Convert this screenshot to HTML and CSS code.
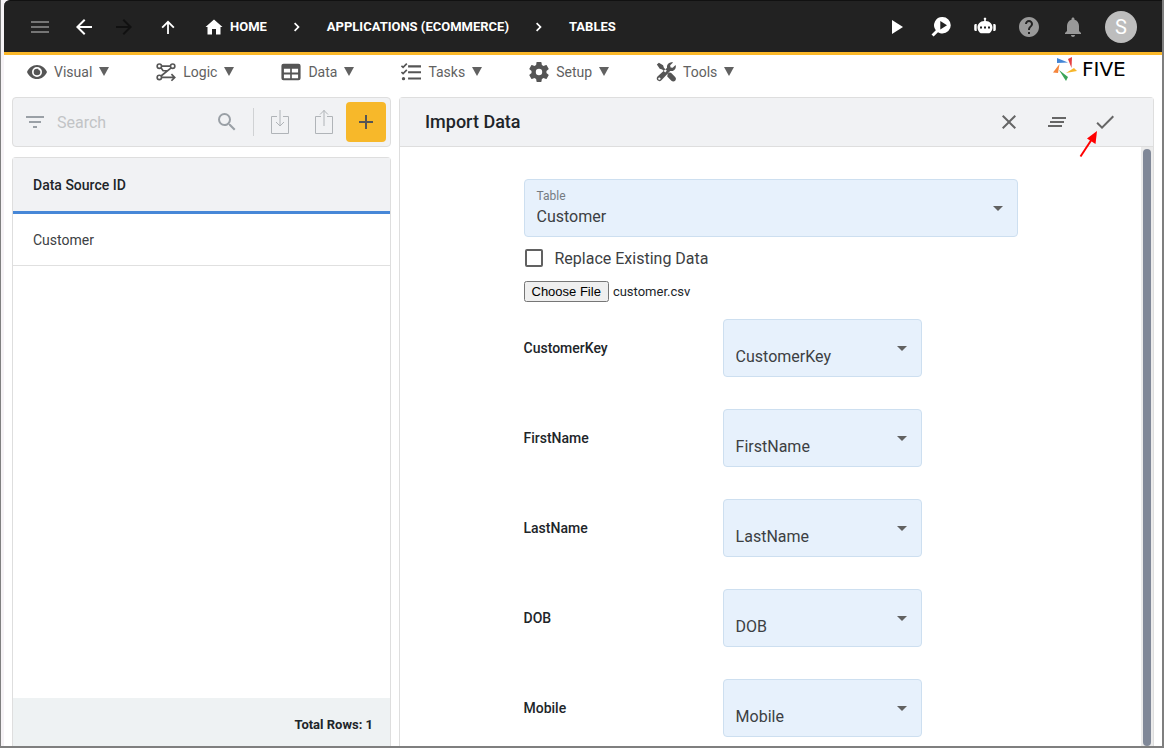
FILE: index.html
```html
<!DOCTYPE html>
<html lang="en">
<head>
<meta charset="utf-8">
<meta name="viewport" content="width=device-width, initial-scale=1">
<title>Five - Import Data</title>
<link rel="stylesheet" href="styles.css">
</head>
<body>
<div class="window">
  <header class="topbar">
    <button class="icon-btn dim" aria-label="Menu"><svg viewBox="0 0 24 24"><path d="M3 6h18v2H3zM3 11h18v2H3zM3 16h18v2H3z"/></svg></button>
    <div class="history">
      <button class="icon-btn" aria-label="Back"><svg viewBox="0 0 24 24"><path d="M20 11H7.830l5.590-5.590L12 4l-8 8 8 8 1.410-1.410L7.830 13H20z"/></svg></button>
      <button class="icon-btn off" aria-label="Forward" disabled><svg viewBox="0 0 24 24"><path d="M12 4l-1.410 1.410L16.170 11H4v2h12.170l-5.580 5.590L12 20l8-8z"/></svg></button>
    </div>
    <button class="icon-btn" aria-label="Up"><svg viewBox="0 0 24 24"><path d="M5.500 12l1.300 1.300 4.300-4.300V19h1.800V9l4.300 4.300 1.300-1.300L12 5.500z"/></svg></button>
    <nav class="crumbs" aria-label="Breadcrumb">
      <a href="#" class="home"><svg viewBox="0 0 24 24"><path d="M10 19.500v-5.500h4v5.500h4.500v-7.500H20.500L12 4.500 3.500 12H5.500v7.500z"/></svg>HOME</a>
      <svg viewBox="0 0 24 24"><path d="M10.200 7.500L9 8.700l3.300 3.300L9 15.300l1.200 1.200 4.500-4.500z"/></svg>
      <a href="#">APPLICATIONS (ECOMMERCE)</a>
      <svg viewBox="0 0 24 24"><path d="M10.200 7.500L9 8.700l3.300 3.300L9 15.300l1.200 1.200 4.500-4.500z"/></svg>
      <a href="#">TABLES</a>
    </nav>
    <div class="actions">
      <button class="icon-btn" aria-label="Run"><svg viewBox="0 0 24 24"><path d="M7 5v14l11-7z"/></svg></button>
      <button class="icon-btn" aria-label="Inspect"><svg viewBox="0 0 24 24"><path fill-rule="evenodd" d="M13.500 2a8.200 8.200 0 0 1 0 16.500c-1.700 0-3.200-.5-4.500-1.300L4.600 21.600 2.500 19.500l4.300-4.300A8.200 8.200 0 0 1 13.500 2zM11.300 6v8.500l6.700-4.250z"/></svg></button>
      <button class="icon-btn" aria-label="Assistant"><svg viewBox="0 0 24 24"><path fill-rule="evenodd" d="M11.200 6V4.800a1.300 1.300 0 1 1 1.600 0V6c4 .2 6.700 3 6.700 6.500 0 2.300-1.300 4.500-3.200 5.700H7.700c-1.900-1.200-3.200-3.400-3.200-5.700C4.500 9 7.200 6.200 11.200 6zM7 11.500v2h2v-2zm4 0v2h2v-2zm4 0v2h2v-2zM2.400 9h1.300v7H2.400A1.500 1.500 0 0 1 1.200 14.500v-4A1.500 1.500 0 0 1 2.400 9zM20.300 9h1.300a1.500 1.500 0 0 1 1.200 1.500v4a1.500 1.500 0 0 1-1.200 1.500h-1.300z"/></svg></button>
      <button class="icon-btn grey" aria-label="Help"><svg viewBox="0 0 24 24"><path d="M12 2C6.480 2 2 6.480 2 12s4.480 10 10 10 10-4.480 10-10S17.520 2 12 2zm1 17h-2v-2h2v2zm2.070-7.750l-.9.920C13.450 12.900 13 13.500 13 15h-2v-.5c0-1.100.45-2.100 1.170-2.830l1.240-1.260c.37-.36.59-.86.59-1.410 0-1.100-.9-2-2-2s-2 .9-2 2H8c0-2.210 1.790-4 4-4s4 1.790 4 4c0 .88-.36 1.680-.93 2.250z"/></svg></button>
      <button class="icon-btn grey" aria-label="Notifications"><svg viewBox="0 0 24 24"><path d="M12 22c1.100 0 2-.9 2-2h-4c0 1.100.89 2 2 2zm6-6v-5c0-3.070-1.640-5.640-4.500-6.320V4c0-.83-.67-1.500-1.500-1.500s-1.500.67-1.500 1.500v.68C7.630 5.360 6 7.920 6 11v5l-2 2v1h16v-1l-2-2z"/></svg></button>
      <button class="avatar" aria-label="Account">S</button>
    </div>
  </header>

  <nav class="menubar" aria-label="Main">
    <div class="menus">
      <button><svg viewBox="0 0 24 24"><path fill-rule="evenodd" d="M12 3.500C6.500 3.500 2 7 0 12c2 5 6.500 8.500 12 8.500s10-3.500 12-8.500c-2-5-6.500-8.500-12-8.500zM12 18a6 6 0 1 1 0-12 6 6 0 0 1 0 12zM12 8a4 4 0 1 0 4 4c0-.7-.2-1.300-.5-1.900a2 2 0 0 1-2-2A4 4 0 0 0 12 8z"/></svg>Visual <i></i></button>
      <button><svg viewBox="0 0 24 24" class="stroke"><circle cx="4" cy="5" r="2.600"/><circle cx="20" cy="5" r="2.600"/><circle cx="4" cy="18.500" r="2.600"/><path d="M6.600 5h10.800M18.200 7L6 16.800M6.600 18.500H22M18.500 14.500l4 4-4 4M6 7l2.500 3.500h5"/></svg>Logic <i></i></button>
      <button><svg viewBox="0 0 24 24"><path fill-rule="evenodd" d="M3 2h18a2.500 2.500 0 0 1 2.500 2.500v15A2.500 2.500 0 0 1 21 22H3a2.500 2.500 0 0 1-2.500-2.500v-15A2.500 2.500 0 0 1 3 2zM3.500 8v4.500H11V8zM13 8v4.500h7.500V8zM3.500 15v4.500H11V15zM13 15v4.500h7.500V15z"/></svg>Data <i></i></button>
      <button><svg viewBox="0 0 24 24"><path d="M8.500 4H24v2.500H8.500zM8.500 11H24v2.500H8.500zM8.500 18.500H24V21H8.500z"/><circle cx="3" cy="20" r="2"/><path fill="none" stroke="currentColor" stroke-width="2" d="M.5 4.500l2 2L7 2M.5 12l2 2L7 9.500"/></svg>Tasks <i></i></button>
      <button><svg viewBox="2 2 20 20"><path d="M19.430 12.980c.04-.32.07-.64.07-.98s-.03-.66-.07-.98l2.110-1.650c.19-.15.24-.42.12-.64l-2-3.460c-.12-.22-.39-.3-.61-.22l-2.490 1c-.52-.4-1.080-.73-1.690-.98l-.38-2.650A.49.49 0 0 0 14 2h-4c-.25 0-.46.18-.49.42l-.38 2.650c-.61.25-1.170.59-1.690.98l-2.490-1c-.23-.09-.49 0-.61.22l-2 3.460c-.13.22-.07.49.12.64l2.110 1.650c-.04.32-.07.65-.07.98s.03.66.07.98l-2.110 1.650c-.19.15-.24.42-.12.64l2 3.460c.12.22.39.3.61.22l2.490-1c.52.4 1.080.73 1.690.98l.38 2.650c.03.24.24.42.49.42h4c.25 0 .46-.18.49-.42l.38-2.650c.61-.25 1.170-.59 1.690-.98l2.490 1c.23.09.49 0 .61-.22l2-3.460c.12-.22.07-.49-.12-.64l-2.110-1.650zM12 15.200a3.200 3.200 0 1 1 0-6.400 3.200 3.200 0 0 1 0 6.400z"/></svg>Setup <i></i></button>
      <button><svg viewBox="0 0 24 24"><path fill-rule="evenodd" d="M1 3l2.500-2 5 3 1 3 3.500 3.500-2 2L7.500 9l-3-1zM14 14l2-1.500 2 .5 5 5c1.500 1.500 1 3.500 0 4.500s-3 1.500-4.500 0l-5-5zM17.500.5c1-.3 2-.3 3 0L17 4l.5 2.500 2.500.5 3.500-3.500c1 3-.5 6.500-3.500 7.200-1.200.3-2 .2-3 0L6.500 22c-1.500 1.500-3.500 1.200-4.700 0s-1.300-3.200 0-4.500L13.300 7C12.500 4 14.500 1 17.500.5zM4 18.500a1.400 1.400 0 1 0 .1 0z"/></svg>Tools <i></i></button>
    </div>
    <a href="#" class="brand" aria-label="Five">
      <svg viewBox="0 0 24 24"><path fill="#4285d6" d="M4 1l11 4.500-11 .5z"/><path fill="#e53f3f" d="M15 2l4-2-.5 11z"/><path fill="#f6b62b" d="M13 16l8-5 3 3z"/><path fill="#3ba457" d="M6 13l9 7-2 4z"/><path fill="#f5853c" d="M6.500 7L5 16l-5-.5z"/></svg>
      FIVE
    </a>
  </nav>

  <main class="panes">
    <section class="list-pane">
      <div class="searchbar">
        <svg viewBox="0 0 24 24"><path d="M3 6h18v2H3zM6 11h12v2H6zM10 16h4v2h-4z"/></svg>
        <input type="search" placeholder="Search" aria-label="Search">
        <button class="icon-btn" aria-label="Search"><svg viewBox="0 0 24 24"><path d="M15.500 14h-.79l-.28-.27A6.471 6.471 0 0 0 16 9.500 6.500 6.500 0 1 0 9.500 16c1.610 0 3.090-.59 4.230-1.570l.27.28v.79l5 4.990L20.490 19l-4.990-5zm-6 0C7.010 14 5 11.990 5 9.500S7.010 5 9.500 5 14 7.010 14 9.500 11.990 14 9.500 14z"/></svg></button>
        <div class="transfer">
          <button class="icon-btn" aria-label="Import"><svg viewBox="0 0 24 24" class="thin"><path d="M9 6.500H3.500v17h17v-17H15M12 0v16M8 12l4 4 4-4"/></svg></button>
          <button class="icon-btn" aria-label="Export"><svg viewBox="0 0 24 24" class="thin"><path d="M9 6.500H3.500v17h17v-17H15M12 16V0M8 4.500l4-4 4 4"/></svg></button>
        </div>
        <button class="add" aria-label="Add"><svg viewBox="0 0 24 24"><path d="M19 13h-6v6h-2v-6H5v-2h6V5h2v6h6z"/></svg></button>
      </div>
      <div class="list">
        <table>
          <thead><tr><th scope="col">Data Source ID</th></tr></thead>
          <tbody><tr><td>Customer</td></tr></tbody>
        </table>
        <footer>Total Rows: 1</footer>
      </div>
    </section>

    <section class="form-pane">
      <header class="form-head">
        <h1>Import Data</h1>
        <button class="icon-btn" aria-label="Close"><svg viewBox="0 0 24 24"><path d="M19 6.410L17.590 5 12 10.590 6.410 5 5 6.410 10.590 12 5 17.590 6.410 19 12 13.410 17.590 19 19 17.590 13.410 12z"/></svg></button>
        <button class="icon-btn" aria-label="Details"><svg viewBox="0 0 24 24"><path d="M7 7h14v2H7zM5 11h14v2H5zM3 15h14v2H3z"/></svg></button>
        <button class="icon-btn save" aria-label="Save"><svg viewBox="0 0 24 24"><path d="M9 16.200L4.800 12l-1.400 1.400L9 19 21 7l-1.400-1.400z"/></svg>
          <svg class="pointer" viewBox="0 0 20 28"><path fill="none" stroke="#f00" stroke-width="2" d="M1.500 26.500L13 9"/><path fill="#f00" d="M18 1L16.500 14 8 8.500z"/></svg>
        </button>
      </header>
      <div class="form-body">
        <form>
          <div class="field">
            <select id="table"><option>Customer</option></select>
            <label for="table">Table</label>
            <svg viewBox="0 0 10 5"><path d="M0 0h10L5 5z"/></svg>
          </div>
          <label class="check"><input type="checkbox">Replace Existing Data</label>
          <input type="file" id="file" class="file" aria-label="Data file" accept=".csv">
          <div class="mapping">
            <label for="m1">CustomerKey</label>
            <div class="field"><select id="m1"><option>CustomerKey</option></select><svg viewBox="0 0 10 5"><path d="M0 0h10L5 5z"/></svg></div>
            <label for="m2">FirstName</label>
            <div class="field"><select id="m2"><option>FirstName</option></select><svg viewBox="0 0 10 5"><path d="M0 0h10L5 5z"/></svg></div>
            <label for="m3">LastName</label>
            <div class="field"><select id="m3"><option>LastName</option></select><svg viewBox="0 0 10 5"><path d="M0 0h10L5 5z"/></svg></div>
            <label for="m4">DOB</label>
            <div class="field"><select id="m4"><option>DOB</option></select><svg viewBox="0 0 10 5"><path d="M0 0h10L5 5z"/></svg></div>
            <label for="m5">Mobile</label>
            <div class="field"><select id="m5"><option>Mobile</option></select><svg viewBox="0 0 10 5"><path d="M0 0h10L5 5z"/></svg></div>
          </div>
        </form>
        <div class="track"><div class="thumb"></div></div>
      </div>
    </section>
  </main>
</div>
<script src="app.js"></script>
</body>
</html>
```
FILE: styles.css
```css
* { box-sizing: border-box; }

body {
  margin: 0;
  font-family: Roboto, "Liberation Sans", sans-serif;
  font-size: 14px;
  color: #212529;
}

button, input, select { font: inherit; color: inherit; }

button {
  padding: 0;
  border: 0;
  background: none;
}

a { color: inherit; text-decoration: none; }

svg {
  display: block;
  flex: none;
  width: 24px;
  height: 24px;
  fill: currentColor;
}

.window {
  display: flex;
  flex-direction: column;
  height: 100vh;
  padding-left: 3px;
  overflow: hidden;
  background: #f6f3f6;
  border: solid #7f7f7f;
  border-width: 0 2px 2px 1px;
}

.icon-btn { flex: none; }
.dim { color: #757575; }
.off { color: #111; }
.grey { color: #999; }

/* top bar */
.topbar {
  display: flex;
  flex: none;
  align-items: center;
  gap: 20px;
  height: 55px;
  padding: 0 25px 0 24px;
  color: #fff;
  background: #222;
  border-top: 1px solid #111;
  border-bottom: 3px solid #fbb829;
  border-top-left-radius: 6px;
}

.history { display: flex; gap: 16px; }

.crumbs {
  display: flex;
  flex: 1;
  align-items: center;
  gap: 18px;
  padding-left: 2px;
  font-size: 13px;
  font-weight: 700;
}

.home { display: flex; align-items: center; gap: 4px; }

.actions { display: flex; align-items: center; gap: 20px; }

.avatar {
  width: 32px;
  height: 32px;
  border-radius: 50%;
  background: #bdbdbd;
  font-size: 20px;
}

/* menu bar */
.menubar {
  display: flex;
  flex: none;
  justify-content: space-between;
  height: 42px;
  padding: 0 22px 0 23px;
  background: #fff;
}

.menus { display: flex; gap: 47px; height: 33px; }

.menus button {
  display: flex;
  align-items: center;
  gap: 7px;
  color: #616161;
}

.menus svg { width: 20px; height: 20px; color: #555; }

.menus .stroke {
  fill: none;
  stroke: currentColor;
  stroke-width: 2;
}

.menus i {
  border: solid transparent;
  border-width: 9px 5px 0;
  border-top-color: #616161;
}

.brand {
  display: flex;
  align-items: center;
  gap: 5px;
  width: 87px;
  height: 28px;
  color: #000;
  font: 20px "DejaVu Sans", sans-serif;
}

/* panes */
.panes {
  display: flex;
  flex: 1;
  gap: 8px;
  min-height: 0;
  padding: 0 8px;
  background: #fff;
}

.list-pane {
  display: flex;
  flex: 0 0 379px;
  flex-direction: column;
  gap: 10px;
  min-width: 0;
}

.searchbar {
  display: flex;
  flex: none;
  align-items: center;
  height: 50px;
  padding: 0 4px 0 10px;
  color: #9aa0a6;
  background: #f1f2f4;
  border: 1px solid #dedede;
  border-radius: 4px;
}

.searchbar input {
  flex: 1;
  min-width: 0;
  padding: 0 10px;
  border: 0;
  outline: 0;
  background: none;
  font-size: 16px;
}

.searchbar input::placeholder { color: #c2c4c6; }

.transfer {
  display: flex;
  gap: 20px;
  height: 28px;
  align-items: center;
  margin: 0 10px 0 14px;
  padding-left: 14px;
  border-left: 1px solid #d0d2d4;
}

.thin { fill: none; stroke: #b0b4b8; }

.add {
  display: grid;
  flex: none;
  place-items: center;
  width: 40px;
  height: 40px;
  border-radius: 4px;
  color: #555;
  background: #f7b82a;
}

.list {
  display: flex;
  flex: 1;
  flex-direction: column;
  justify-content: space-between;
  border: 1px solid #dedede;
  border-bottom: 0;
  border-radius: 4px 4px 0 0;
}

table { width: 100%; border-spacing: 0; }

th, td { padding: 0 20px; text-align: left; }

th {
  height: 56px;
  font-weight: 500;
  background: #f1f2f4;
  border-bottom: 3px solid #4787d7;
}

td {
  height: 52px;
  color: #3c4043;
  border-bottom: 1px solid #e0e0e0;
}

.list footer {
  height: 48px;
  padding: 0 17px;
  line-height: 53px;
  font-size: 13px;
  font-weight: 700;
  text-align: right;
  background: #eef2f3;
}

/* import form */
.form-pane {
  display: flex;
  flex: 1;
  flex-direction: column;
  min-width: 0;
  border: 1px solid #dedede;
  border-bottom: 0;
  border-radius: 4px 4px 0 0;
}

.form-head {
  display: flex;
  flex: none;
  align-items: center;
  gap: 24px;
  height: 49px;
  padding: 0 36px 0 25px;
  color: #666;
  background: #f1f2f4;
  border-bottom: 1px solid #dedede;
}

h1 {
  flex: 1;
  margin: 0;
  padding-bottom: 2px;
  color: #212529;
  font-size: 18px;
  font-weight: 500;
}

.save { position: relative; }

.pointer {
  position: absolute;
  top: 20px;
  right: 18px;
  width: 20px;
  height: 28px;
}

.form-body {
  display: flex;
  flex: 1;
  min-height: 0;
}

form {
  display: grid;
  flex: 1;
  grid-template-columns: 1fr 4fr 1fr;
  align-content: start;
  padding: 32px 0;
  overflow: hidden;
}

form > * { grid-column: 2; }

.field { display: grid; align-items: center; }

.field > * { grid-area: 1 / 1; }

.field select {
  width: 100%;
  height: 58px;
  padding: 18px 32px 2px 12px;
  appearance: none;
  font-size: 16px;
  color: #3c4043;
  background: #e7f1fc;
  border: 1px solid #cddff0;
  border-radius: 4px;
}

.field label {
  align-self: start;
  padding: 9px 13px;
  font-size: 12px;
  line-height: 16px;
  color: #757b82;
}

.field svg {
  justify-self: end;
  width: 10px;
  height: 5px;
  margin-right: 15px;
  color: #616161;
  pointer-events: none;
}

.check {
  display: flex;
  align-items: center;
  gap: 12px;
  height: 42px;
  font-size: 16px;
  color: #3c4043;
}

.check input {
  appearance: none;
  width: 18px;
  height: 18px;
  margin: 0 0 0 1px;
  border: 2px solid #616161;
  border-radius: 2px;
}

.file {
  margin: 2px 0 17px;
  font-size: 13px;
  line-height: 15px;
}

.mapping {
  display: grid;
  grid-template-columns: 40.3% 40.3%;
  align-items: center;
  row-gap: 32px;
}

.mapping > label { font-weight: 500; }

.track {
  flex: none;
  width: 12px;
  padding: 2px 2px 0;
  background: #ebebeb;
}

.thumb {
  height: 100%;
  border-radius: 4px;
  background: #808898;
}
```
FILE: app.js
```js
// Preselect the data file to import.
const files = new DataTransfer();
files.items.add(new File([""], "customer.csv", { type: "text/csv" }));
document.getElementById("file").files = files.files;
```
